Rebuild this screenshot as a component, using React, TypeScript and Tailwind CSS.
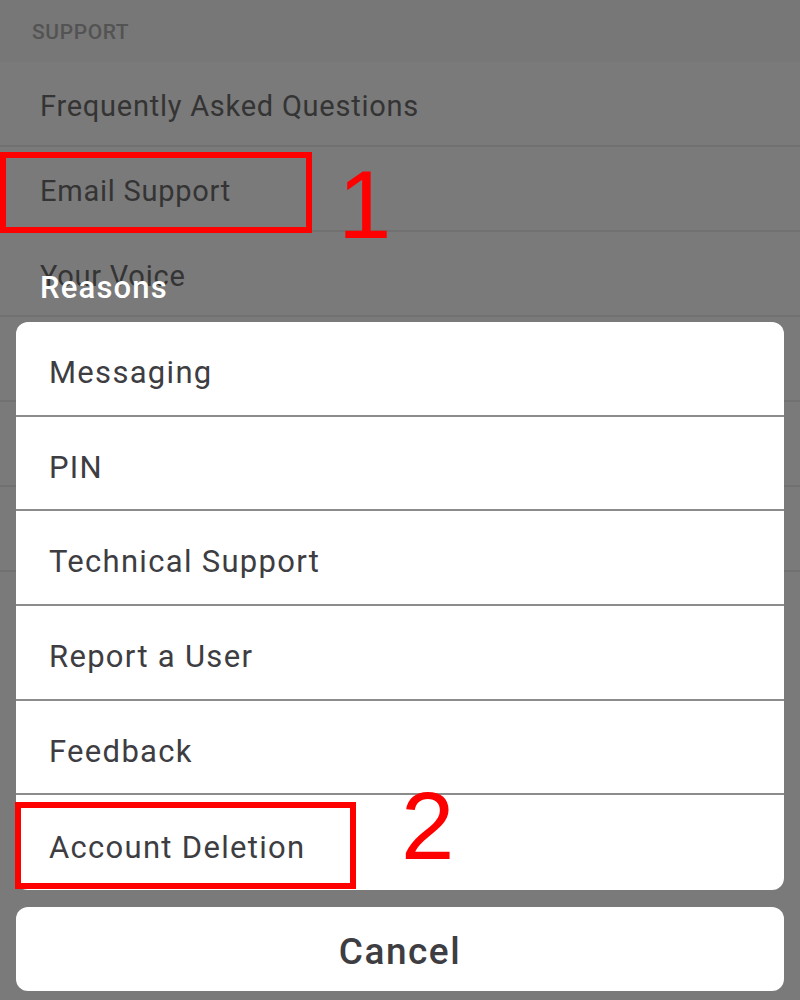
import React from "react";

const bgRows = ["Frequently Asked Questions", "Email Support", "Your Voice", "", "", ""];
const reasons = ["Messaging", "PIN", "Technical Support", "Report a User", "Feedback", "Account Deletion"];

export default function App() {
  return (
    <div className="relative w-[800px] h-[1000px] overflow-hidden bg-[#7a7a7a] font-['Roboto',sans-serif]">
      {/* Settings page behind the dimmed overlay */}
      <div className="flex flex-col">
        <div className="h-[62px] bg-[#777777] flex items-center px-8 pt-[4px]">
          <span className="text-[21px] font-medium tracking-[0.6px] text-[#535353]">SUPPORT</span>
        </div>
        {bgRows.map((label, i) => (
          <div key={i} className="h-[85px] border-b-2 border-[#717171] flex items-center px-10 pt-[6px]">
            <span className="text-[29px] text-[#343434] tracking-[0.75px]">{label}</span>
          </div>
        ))}
      </div>

      {/* Action sheet */}
      <div className="absolute inset-x-0 top-[268px] flex flex-col px-4">
        <div className="h-[40px] flex items-center px-6 -mb-[1px]">
          <span className="text-[31px] font-medium text-white tracking-[1.2px]">Reasons</span>
        </div>
        <div className="mt-[15px] bg-white rounded-[12px] overflow-hidden flex flex-col">
          {reasons.map((r, i) => (
            <div
              key={r}
              className={`h-[94.7px] flex items-center px-[33px] pt-[10px] ${i < reasons.length - 1 ? "border-b-2 border-[#8c8c8c]" : ""}`}
            >
              <span className="text-[31px] text-[#3d3d42] tracking-[1.3px]">{r}</span>
            </div>
          ))}
        </div>
        <button className="mt-[17px] h-[84px] bg-white rounded-[12px] flex items-center justify-center pt-[6px]">
          <span className="text-[37px] font-medium text-[#3d3d42] tracking-[1.5px]">Cancel</span>
        </button>
      </div>

      {/* Annotations */}
      <div className="absolute left-0 top-[152px] w-[312px] h-[81px] border-[6px] border-[#ff0000]" />
      <span className="absolute left-[338px] top-[157px] text-[96px] leading-none text-[#ff0000] font-['Liberation_Sans',sans-serif]">1</span>
      <div className="absolute left-[15px] top-[802px] w-[341px] h-[87px] border-[6px] border-[#ff0000]" />
      <span className="absolute left-[401px] top-[778px] text-[96px] leading-none text-[#ff0000] font-['Liberation_Sans',sans-serif]">2</span>
    </div>
  );
}
